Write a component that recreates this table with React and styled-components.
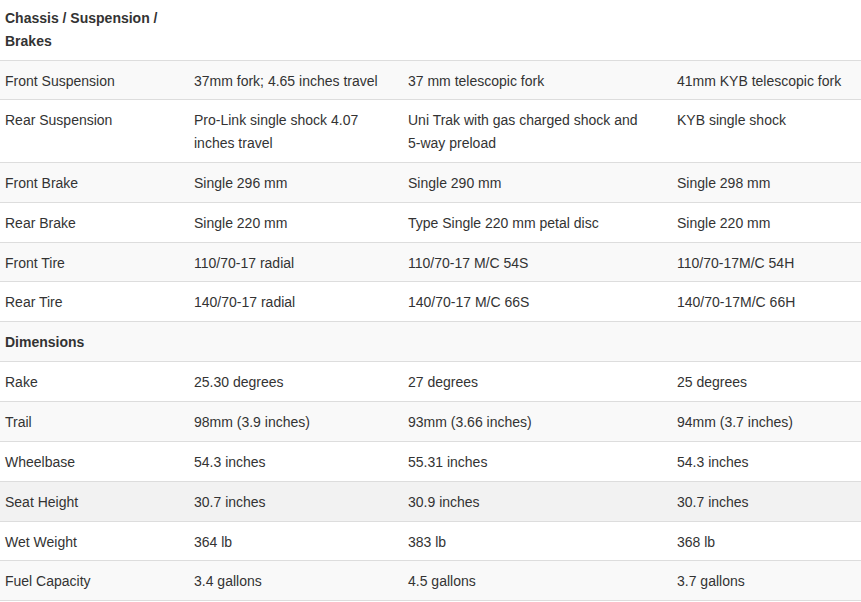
import React from "react";
import styled, { createGlobalStyle } from "styled-components";

const Global = createGlobalStyle`
  html, body { margin: 0; padding: 0; background: #fff; }
  body { font-family: "Liberation Sans", Arial, sans-serif; color: #333; }
`;

const Table = styled.table`
  width: 861px;
  border-collapse: collapse;
  table-layout: fixed;
  font-size: 14px;
  line-height: 22.75px;
  color: #333;
`;

const Col = styled.col`
  width: ${(p) => p.$w}px;
`;

const Row = styled.tr`
  background: ${(p) => (p.$hover ? "#f2f2f2" : p.$striped ? "#f9f9f9" : "#fff")};
  border-top: ${(p) => (p.$first ? "none" : "1px solid #ddd")};
  border-bottom: ${(p) => (p.$last ? "1px solid #ddd" : "none")};
`;

const Cell = styled.td`
  padding: ${(p) => (p.$top ? "7px 8px 7px 5px" : "9px 8px 7.1px 5px")};
  vertical-align: top;
  text-align: left;
  font-weight: ${(p) => (p.$head ? "bold" : "normal")};
`;

const NoWrap = styled.span`
  white-space: nowrap;
`;

const sections = [
  {
    title: "Chassis / Suspension / Brakes",
    rows: [
      ["Front Suspension", "37mm fork; 4.65 inches travel", "37 mm telescopic fork", "41mm KYB telescopic fork"],
      ["Rear Suspension", "Pro-Link single shock 4.07 inches travel", <>Uni Trak with gas charged shock and <NoWrap>5-way</NoWrap> preload</>, "KYB single shock"],
      ["Front Brake", "Single 296 mm", "Single 290 mm", "Single 298 mm"],
      ["Rear Brake", "Single 220 mm", "Type Single 220 mm petal disc", "Single 220 mm"],
      ["Front Tire", "110/70-17 radial", "110/70-17 M/C 54S", "110/70-17M/C 54H"],
      ["Rear Tire", "140/70-17 radial", "140/70-17 M/C 66S", "140/70-17M/C 66H"],
    ],
  },
  {
    title: "Dimensions",
    rows: [
      ["Rake", "25.30 degrees", "27 degrees", "25 degrees"],
      ["Trail", "98mm (3.9 inches)", "93mm (3.66 inches)", "94mm (3.7 inches)"],
      ["Wheelbase", "54.3 inches", "55.31 inches", "54.3 inches"],
      ["Seat Height", "30.7 inches", "30.9 inches", "30.7 inches"],
      ["Wet Weight", "364 lb", "383 lb", "368 lb"],
      ["Fuel Capacity", "3.4 gallons", "4.5 gallons", "3.7 gallons"],
    ],
  },
];

const widths = [189, 214, 269, 189];

export default function App() {
  const flat = [];
  sections.forEach((s) => {
    flat.push({ head: true, label: s.title, cells: [s.title, "", "", ""] });
    s.rows.forEach((r) => flat.push({ head: false, label: r[0], cells: r }));
  });
  return (
    <>
      <Global />
      <Table>
        <colgroup>
          {widths.map((w, i) => (
            <Col key={i} $w={w} />
          ))}
        </colgroup>
        <tbody>
          {flat.map((r, i) => (
            <Row
              key={i}
              $first={i === 0}
              $last={i === flat.length - 1}
              $striped={i % 2 === 1}
              $hover={r.label === "Seat Height"}
            >
              {r.cells.map((c, j) => (
                <Cell key={j} $head={r.head} $top={i === 0}>
                  {c}
                </Cell>
              ))}
            </Row>
          ))}
        </tbody>
      </Table>
    </>
  );
}
